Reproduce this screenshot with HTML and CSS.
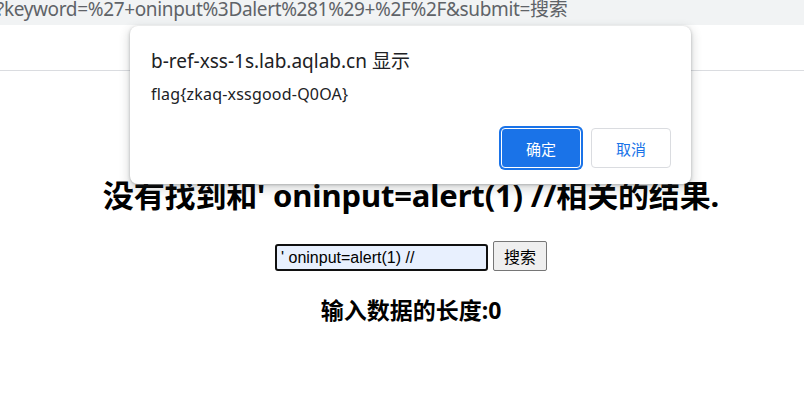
FILE: index.html
```html
<!DOCTYPE html>
<html lang="zh">
<head>
<meta charset="utf-8">
<link rel="stylesheet" href="styles.css">
</head>
<body>
<div class="urlbar"><span class="url">?keyword=%27+oninput%3Dalert%281%29+%2F%2F&amp;submit=搜索</span></div>
<div class="toolbar"></div>
<main class="page">
  <h1 class="result">没有找到和' oninput=alert(1) //相关的结果.</h1>
  <form class="search">
    <input class="kw" type="text" value="' oninput=alert(1) //">
    <button class="submit" type="button">搜索</button>
  </form>
  <h2 class="len">输入数据的长度:0</h2>
</main>
<div class="dialog">
  <div class="d-title">b-ref-xss-1s.lab.aqlab.cn 显示</div>
  <div class="d-msg">flag{zkaq-xssgood-Q0OA}</div>
  <div class="d-actions">
    <button class="btn primary" type="button">确定</button>
    <button class="btn secondary" type="button">取消</button>
  </div>
</div>
</body>
</html>
```
FILE: styles.css
```css
html, body {
  margin: 0;
  padding: 0;
  background: #ffffff;
  width: 804px;
  height: 404px;
  overflow: hidden;
}
body {
  font-family: "Noto Sans", "Noto Sans CJK SC", sans-serif;
  position: relative;
}
.urlbar {
  height: 25px;
  background: #f1f3f4;
  overflow: hidden;
  white-space: nowrap;
}
.url {
  display: block;
  margin-left: -4px;
  margin-top: -3px;
  font-family: "Noto Sans", "Noto Sans CJK SC", sans-serif;
  font-size: 19px;
  line-height: 24px;
  color: #5f6368;
  letter-spacing: -0.35px;
}
.toolbar {
  height: 45px;
  border-bottom: 1px solid #dadce0;
}
.page {
  display: flex;
  flex-direction: column;
  align-items: center;
  padding-left: 18px;
}
.result {
  margin: 105px 0 0 0;
  font-family: "Noto Sans", "Noto Sans CJK SC", sans-serif;
  font-size: 31px;
  font-weight: 700;
  line-height: 38px;
  color: #000;
  letter-spacing: -0.15px;
  white-space: nowrap;
}
.search {
  margin-top: 27px;
  display: flex;
  align-items: flex-end;
  gap: 5px;
}
.kw {
  box-sizing: border-box;
  width: 213px;
  height: 27px;
  margin: 0;
  border: 2px solid #101010;
  border-radius: 3px;
  background: #e8f0fe;
  font-family: "Liberation Sans", Arial, sans-serif;
  font-size: 16px;
  color: #000;
  padding: 0 4px;
  outline: none;
}
.submit {
  box-sizing: border-box;
  width: 54px;
  height: 30px;
  border: 1px solid #767676;
  border-radius: 2px;
  background: #efefef;
  font-family: "Noto Sans CJK SC", sans-serif;
  font-size: 16px;
  color: #000;
  padding: 0;
}
.len {
  margin: 24px 0 0 0;
  font-family: "Noto Sans", "Noto Sans CJK SC", sans-serif;
  font-size: 23px;
  font-weight: 700;
  line-height: 30px;
  color: #000;
}
.dialog {
  position: absolute;
  left: 130px;
  top: 26px;
  width: 561px;
  height: 158px;
  box-sizing: border-box;
  background: #fff;
  border-radius: 8px;
  box-shadow: 0 1px 3px rgba(60, 64, 67, 0.35), 0 4px 8px 3px rgba(60, 64, 67, 0.15);
  padding: 22px 20px 16px 21px;
  display: flex;
  flex-direction: column;
}
.d-title {
  font-family: "Noto Sans", "Noto Sans CJK SC", sans-serif;
  font-size: 19px;
  line-height: 26px;
  color: #202124;
}
.d-msg {
  margin-top: 9px;
  font-family: "Noto Sans", "Noto Sans CJK SC", sans-serif;
  font-size: 16px;
  line-height: 22px;
  color: #202124;
  letter-spacing: 0.2px;
}
.d-actions {
  margin-top: auto;
  display: flex;
  justify-content: flex-end;
  gap: 10px;
}
.btn {
  box-sizing: border-box;
  width: 80px;
  height: 40px;
  border-radius: 4px;
  font-family: "Noto Sans CJK SC", sans-serif;
  font-size: 15px;
  padding: 0;
}
.primary {
  background: #1a73e8;
  color: #fff;
  border: 1px solid #fff;
  box-shadow: 0 0 0 2px #1a73e8;
}
.secondary {
  background: #fff;
  color: #1a73e8;
  border: 1px solid #dadce0;
}
```
